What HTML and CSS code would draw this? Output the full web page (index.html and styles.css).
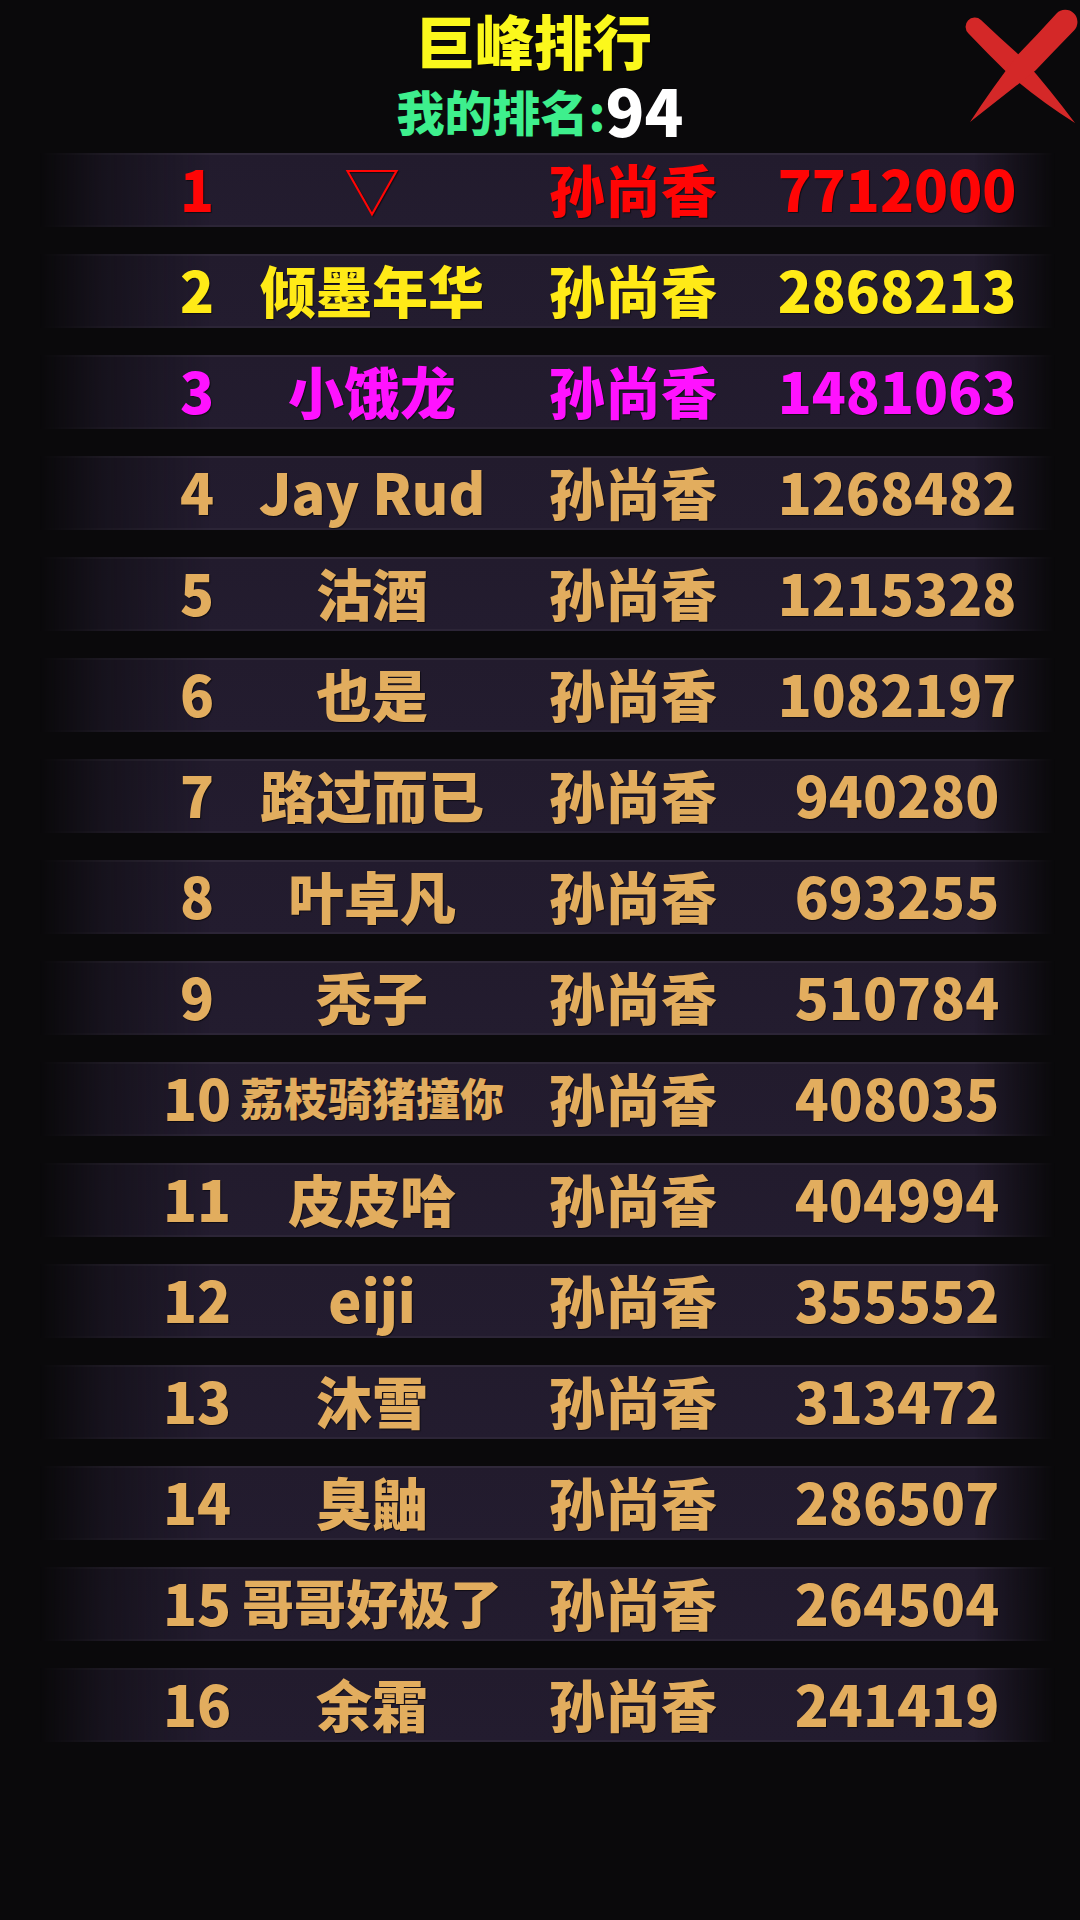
FILE: index.html
```html
<!DOCTYPE html>
<html lang="zh-CN">
<head>
<meta charset="utf-8">
<title>巨峰排行</title>
<link rel="stylesheet" href="styles.css">
</head>
<body>
<div class="page">
  <header class="header">
    <h1 class="title">巨峰排行</h1>
    <div class="mine"><span class="mine-label">我的排名:</span><span class="mine-num">94</span></div>
    <button class="close" aria-label="关闭">
      <svg width="130" height="140" viewBox="0 0 130 140">
        <path d="M41 20 Q62 40 82 57.5 Q112 92 135 123 Q100 101 68 73.5 Q47 53 28.5 33.5 A9 9 0 0 1 41 20 Z" fill="#d42828"/>
        <path d="M116.5 13.5 Q98 34 78.5 54 Q52 88 30 122 Q62 97 95.5 70.5 Q114 51 134 30.5 A11.5 11.5 0 0 0 116.5 13.5 Z" fill="#d42828"/>
      </svg>
    </button>
  </header>
  <ol class="list">
    <li class="row gold1"><span class="rank">1</span><span class="name">▽</span><span class="hero">孙尚香</span><span class="score">7712000</span></li>
    <li class="row gold2"><span class="rank">2</span><span class="name">倾墨年华</span><span class="hero">孙尚香</span><span class="score">2868213</span></li>
    <li class="row gold3"><span class="rank">3</span><span class="name">小饿龙</span><span class="hero">孙尚香</span><span class="score">1481063</span></li>
    <li class="row"><span class="rank">4</span><span class="name">Jay Rud</span><span class="hero">孙尚香</span><span class="score">1268482</span></li>
    <li class="row"><span class="rank">5</span><span class="name">沽酒</span><span class="hero">孙尚香</span><span class="score">1215328</span></li>
    <li class="row"><span class="rank">6</span><span class="name">也是</span><span class="hero">孙尚香</span><span class="score">1082197</span></li>
    <li class="row"><span class="rank">7</span><span class="name">路过而已</span><span class="hero">孙尚香</span><span class="score">940280</span></li>
    <li class="row"><span class="rank">8</span><span class="name">叶卓凡</span><span class="hero">孙尚香</span><span class="score">693255</span></li>
    <li class="row"><span class="rank">9</span><span class="name">秃子</span><span class="hero">孙尚香</span><span class="score">510784</span></li>
    <li class="row"><span class="rank">10</span><span class="name name-xs">荔枝骑猪撞你</span><span class="hero">孙尚香</span><span class="score">408035</span></li>
    <li class="row"><span class="rank">11</span><span class="name">皮皮哈</span><span class="hero">孙尚香</span><span class="score">404994</span></li>
    <li class="row"><span class="rank">12</span><span class="name">eiji</span><span class="hero">孙尚香</span><span class="score">355552</span></li>
    <li class="row"><span class="rank">13</span><span class="name">沐雪</span><span class="hero">孙尚香</span><span class="score">313472</span></li>
    <li class="row"><span class="rank">14</span><span class="name">臭鼬</span><span class="hero">孙尚香</span><span class="score">286507</span></li>
    <li class="row"><span class="rank">15</span><span class="name name-sm">哥哥好极了</span><span class="hero">孙尚香</span><span class="score">264504</span></li>
    <li class="row"><span class="rank">16</span><span class="name">余霜</span><span class="hero">孙尚香</span><span class="score">241419</span></li>
  </ol>
</div>
</body>
</html>
```

FILE: styles.css
```css
html, body {
  margin: 0;
  padding: 0;
  background: #0a090b;
}
body {
  width: 1080px;
  height: 1920px;
  overflow: hidden;
  font-family: "Noto Sans CJK SC", "Noto Sans", sans-serif;
  font-weight: 900;
}
.page {
  width: 1080px;
}
.header {
  position: relative;
  height: 153px;
  display: flex;
  flex-direction: column;
  align-items: center;
  box-sizing: border-box;
  padding-top: 11px;
}
.title {
  margin: 0;
  font-size: 59px;
  line-height: 58px;
  height: 58px;
  font-weight: 900;
  color: #fbf81c;
  text-shadow: 1px 1px 1px rgba(0,0,0,0.6);
  transform: translateX(-6px);
}
.mine {
  margin-top: 10px;
  line-height: 60px;
  height: 60px;
  white-space: nowrap;
  display: flex;
  align-items: flex-end;
}
.mine-label {
  display: inline-block;
  font-size: 48px;
  line-height: 58px;
  height: 58px;
  color: #3eef8d;
}
.mine-num {
  display: inline-block;
  font-size: 64px;
  line-height: 60px;
  height: 60px;
  color: #ffffff;
}
.close {
  position: absolute;
  top: 0;
  left: 940px;
  width: 140px;
  height: 140px;
  padding: 0;
  margin: 0;
  border: 0;
  background: transparent;
}
.close svg {
  display: block;
  overflow: visible;
}
.list {
  list-style: none;
  margin: 0;
  padding: 0;
  display: flex;
  flex-direction: column;
  gap: 27px;
}
.row {
  position: relative;
  isolation: isolate;
  margin-left: 40px;
  width: 1015px;
  height: 74px;
  box-sizing: border-box;
  padding-left: 100px;
  padding-bottom: 4px;
  display: grid;
  grid-template-columns: 114px 236px 286px 242px;
  align-items: center;
  color: #e2ad5e;
  font-size: 56px;
  line-height: 70px;
  text-shadow: 1px 1px 1px rgba(0,0,0,0.55);
}
.row::before {
  content: "";
  position: absolute;
  inset: 0;
  z-index: -1;
  background:
    linear-gradient(180deg, #2f2839 0, #2f2839 2px, #221b2d 2px, #231c2f calc(100% - 2px), #2c2537 calc(100% - 2px));
  -webkit-mask-image: linear-gradient(90deg, transparent 0, rgba(0,0,0,0.5) 6%, #000 17%, #000 92%, transparent 100%);
  mask-image: linear-gradient(90deg, transparent 0, rgba(0,0,0,0.5) 6%, #000 17%, #000 92%, transparent 100%);
}
.row > span {
  display: flex;
  justify-content: center;
  white-space: nowrap;
}
.name-sm { font-size: 52px; }
.name-xs { font-size: 44px; }
.gold1 { color: #ff0505; }
.gold2 { color: #ffea17; }
.gold3 { color: #ff12ff; }
.gold1 .name { font-weight: 400; }
```
